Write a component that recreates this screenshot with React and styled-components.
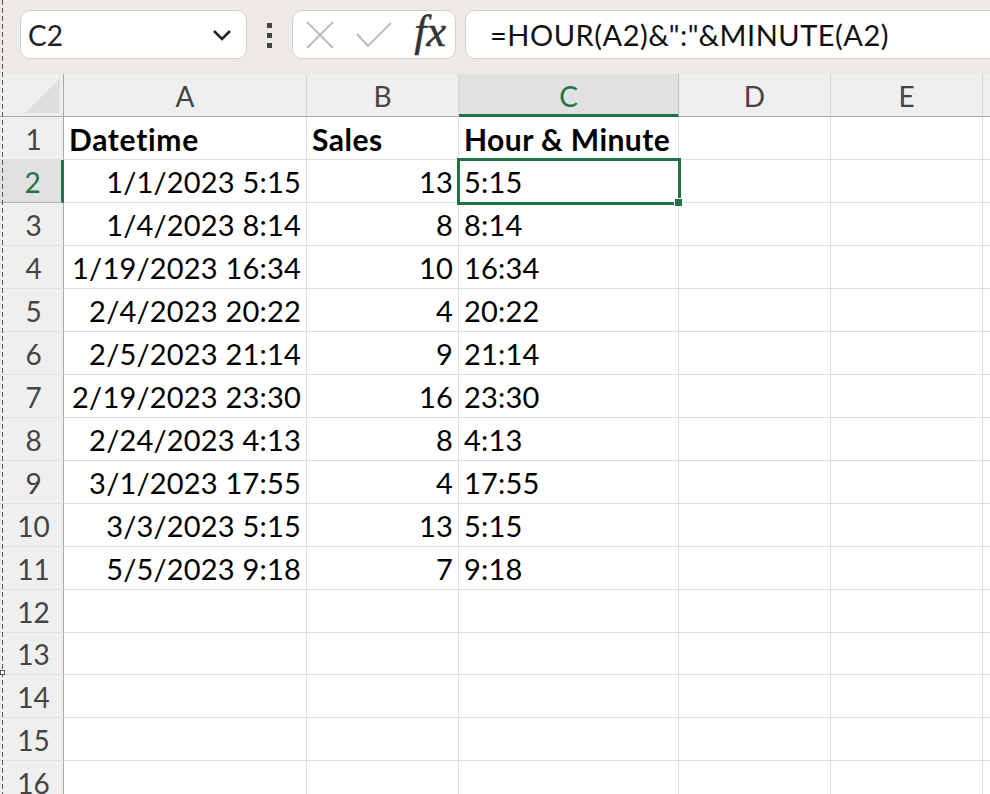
import React from "react";
import styled, { createGlobalStyle } from "styled-components";

const Global = createGlobalStyle`
  html, body { margin: 0; padding: 0; background: #fff; }
  body { width: 990px; height: 794px; overflow: hidden; font-family: "Lato", "Liberation Sans", sans-serif; }
`;

const Page = styled.div`
  position: relative;
  width: 990px;
  height: 794px;
  overflow: hidden;
  display: flex;
  flex-direction: column;
`;

const Toolbar = styled.div`
  height: 74px;
  flex: none;
  box-sizing: border-box;
  background: #ede9e6;
  padding: 10px 0 0 20px;
  display: flex;
  align-items: flex-start;
`;

const Pill = styled.div`
  height: 49px;
  box-sizing: border-box;
  background: #fff;
  border: 1px solid #d2d0ce;
  border-radius: 10px;
  display: flex;
  align-items: center;
`;

const NameBox = styled(Pill)`
  width: 227px;
  padding: 0 14px 0 7px;
  justify-content: space-between;
  font-size: 28px;
  color: #222;
`;

const Grip = styled.div`
  width: 45px;
  display: flex;
  flex-direction: column;
  align-items: center;
  gap: 5px;
  padding-top: 13px;
  & > i { width: 5px; height: 5px; background: #444; display: block; }
`;

const ActionBox = styled(Pill)`
  width: 164px;
  padding: 0 9px 0 13px;
  justify-content: space-between;
`;

const FxLabel = styled.span`
  font-family: "Liberation Serif", serif;
  font-style: italic;
  font-weight: 400;
  font-size: 44px;
  line-height: 1;
  color: #333;
  margin-top: -5px;
  -webkit-text-stroke: 0.5px #333;
`;

const FormulaBox = styled(Pill)`
  flex: 1;
  margin: 0 -20px 0 9px;
  padding-left: 24px;
  font-size: 29px;
  letter-spacing: 0.52px;
  color: #111;
`;

const Sheet = styled.div`
  display: grid;
  grid-template-columns: 64px 243px 152px 220px 152px 152px 1fr;
  grid-template-rows: repeat(13, 43px) 42px repeat(3, 43px);
`;

const Corner = styled.div`
  background: #efefef;
  border-right: 1px solid #a8a8a8;
  border-bottom: 1px solid #a8a8a8;
  box-sizing: border-box;
  position: relative;
  &::after {
    content: "";
    position: absolute;
    right: 3px;
    bottom: 3px;
    width: 0;
    height: 0;
    border-style: solid;
    border-width: 0 0 35px 35px;
    border-color: transparent transparent #dfdfdf transparent;
  }
`;

const ColHead = styled.div`
  box-sizing: border-box;
  display: flex;
  align-items: center;
  justify-content: center;
  padding-top: ${(p) => (p.$active ? 3 : 2)}px;
  font-size: 28px;
  color: ${(p) => (p.$active ? "#217346" : "#444")};
  background: ${(p) => (p.$active ? "#e1e1e1" : "#efefef")};
  border-right: 1px solid ${(p) => (p.$active ? "#c0c0c0" : "#d4d4d4")};
  border-bottom: ${(p) => (p.$active ? "3px solid #217346" : "1px solid #a8a8a8")};
`;

const RowHead = styled.div`
  box-sizing: border-box;
  display: flex;
  align-items: center;
  justify-content: center;
  padding: 1px 0 0 4px;
  font-size: 28px;
  color: ${(p) => (p.$active ? "#217346" : "#444")};
  background: ${(p) => (p.$active ? "#e1e1e1" : "#efefef")};
  border-right: ${(p) => (p.$active ? "3px solid #217346" : "1px solid #a8a8a8")};
  border-bottom: 1px solid ${(p) => (p.$active ? "#b4b4b4" : "#e0e0e0")};
`;

const Cell = styled.div`
  box-sizing: border-box;
  display: flex;
  align-items: center;
  justify-content: ${(p) => (p.$right ? "flex-end" : "flex-start")};
  padding: 1px 5px 0 5px;
  font-size: ${(p) => (p.$bold ? 30 : 29)}px;
  font-weight: ${(p) => (p.$bold ? 700 : 400)};
  letter-spacing: ${(p) => p.$track || 0.2}px;
  color: #000;
  white-space: nowrap;
  border-right: 1px solid #dedede;
  border-bottom: 1px solid #dedede;
  position: relative;
`;

const Selection = styled.div`
  position: absolute;
  z-index: 2;
  left: -2px;
  top: -2px;
  right: -3px;
  bottom: -3px;
  border: 3px solid #217346;
  pointer-events: none;
  &::after {
    content: "";
    position: absolute;
    right: -5px;
    bottom: -5px;
    width: 9px;
    height: 9px;
    background: #217346;
    border: 1px solid #fff;
    box-sizing: border-box;
  }
`;

const MarginGuide = styled.div`
  position: absolute;
  left: 2px;
  top: 0;
  bottom: 0;
  width: 1px;
  background: repeating-linear-gradient(to bottom, #555 0 5px, transparent 5px 8px);
`;

const GuideHandle = styled.div`
  position: absolute;
  left: 0;
  top: 670px;
  width: 5px;
  height: 5px;
  box-sizing: border-box;
  background: #fff;
  border: 1px solid #555;
`;

const rows = [
  ["Datetime", "Sales", "Hour & Minute"],
  ["1/1/2023 5:15", "13", "5:15"],
  ["1/4/2023 8:14", "8", "8:14"],
  ["1/19/2023 16:34", "10", "16:34"],
  ["2/4/2023 20:22", "4", "20:22"],
  ["2/5/2023 21:14", "9", "21:14"],
  ["2/19/2023 23:30", "16", "23:30"],
  ["2/24/2023 4:13", "8", "4:13"],
  ["3/1/2023 17:55", "4", "17:55"],
  ["3/3/2023 5:15", "13", "5:15"],
  ["5/5/2023 9:18", "7", "9:18"],
  ["", "", ""], ["", "", ""], ["", "", ""], ["", "", ""], ["", "", ""],
];

const headTrack = [0.7, 0.5, 0.45];

export default function App() {
  return (
    <Page>
      <Global />
      <Toolbar>
        <NameBox>
          <span>C2</span>
          <svg width="20" height="12" viewBox="0 0 20 12" fill="none">
            <path d="M2 2l8 8 8-8" stroke="#222" strokeWidth="2.6" />
          </svg>
        </NameBox>
        <Grip><i /><i /><i /></Grip>
        <ActionBox>
          <svg width="28" height="28" viewBox="0 0 28 28" fill="none">
            <path d="M1 1l26 26M27 1L1 27" stroke="#bdbdbd" strokeWidth="2" />
          </svg>
          <svg width="36" height="26" viewBox="0 0 36 26" fill="none">
            <path d="M1 12l11 12L35 1" stroke="#bdbdbd" strokeWidth="2" />
          </svg>
          <FxLabel>fx</FxLabel>
        </ActionBox>
        <FormulaBox>=HOUR(A2)&amp;":"&amp;MINUTE(A2)</FormulaBox>
      </Toolbar>
      <Sheet>
        <Corner />
        {["A", "B", "C", "D", "E", ""].map((c, i) => (
          <ColHead key={i} $active={c === "C"}>{c}</ColHead>
        ))}
        {rows.map((r, i) => (
          <React.Fragment key={i}>
            <RowHead $active={i === 1}>{i + 1}</RowHead>
            {r.map((text, j) => (
              <Cell
                key={j}
                $right={i > 0 && j < 2}
                $bold={i === 0}
                $track={i === 0 ? headTrack[j] : undefined}
              >
                {text}
                {i === 1 && j === 2 && <Selection />}
              </Cell>
            ))}
            <Cell /><Cell /><Cell />
          </React.Fragment>
        ))}
      </Sheet>
      <MarginGuide />
      <GuideHandle />
    </Page>
  );
}
